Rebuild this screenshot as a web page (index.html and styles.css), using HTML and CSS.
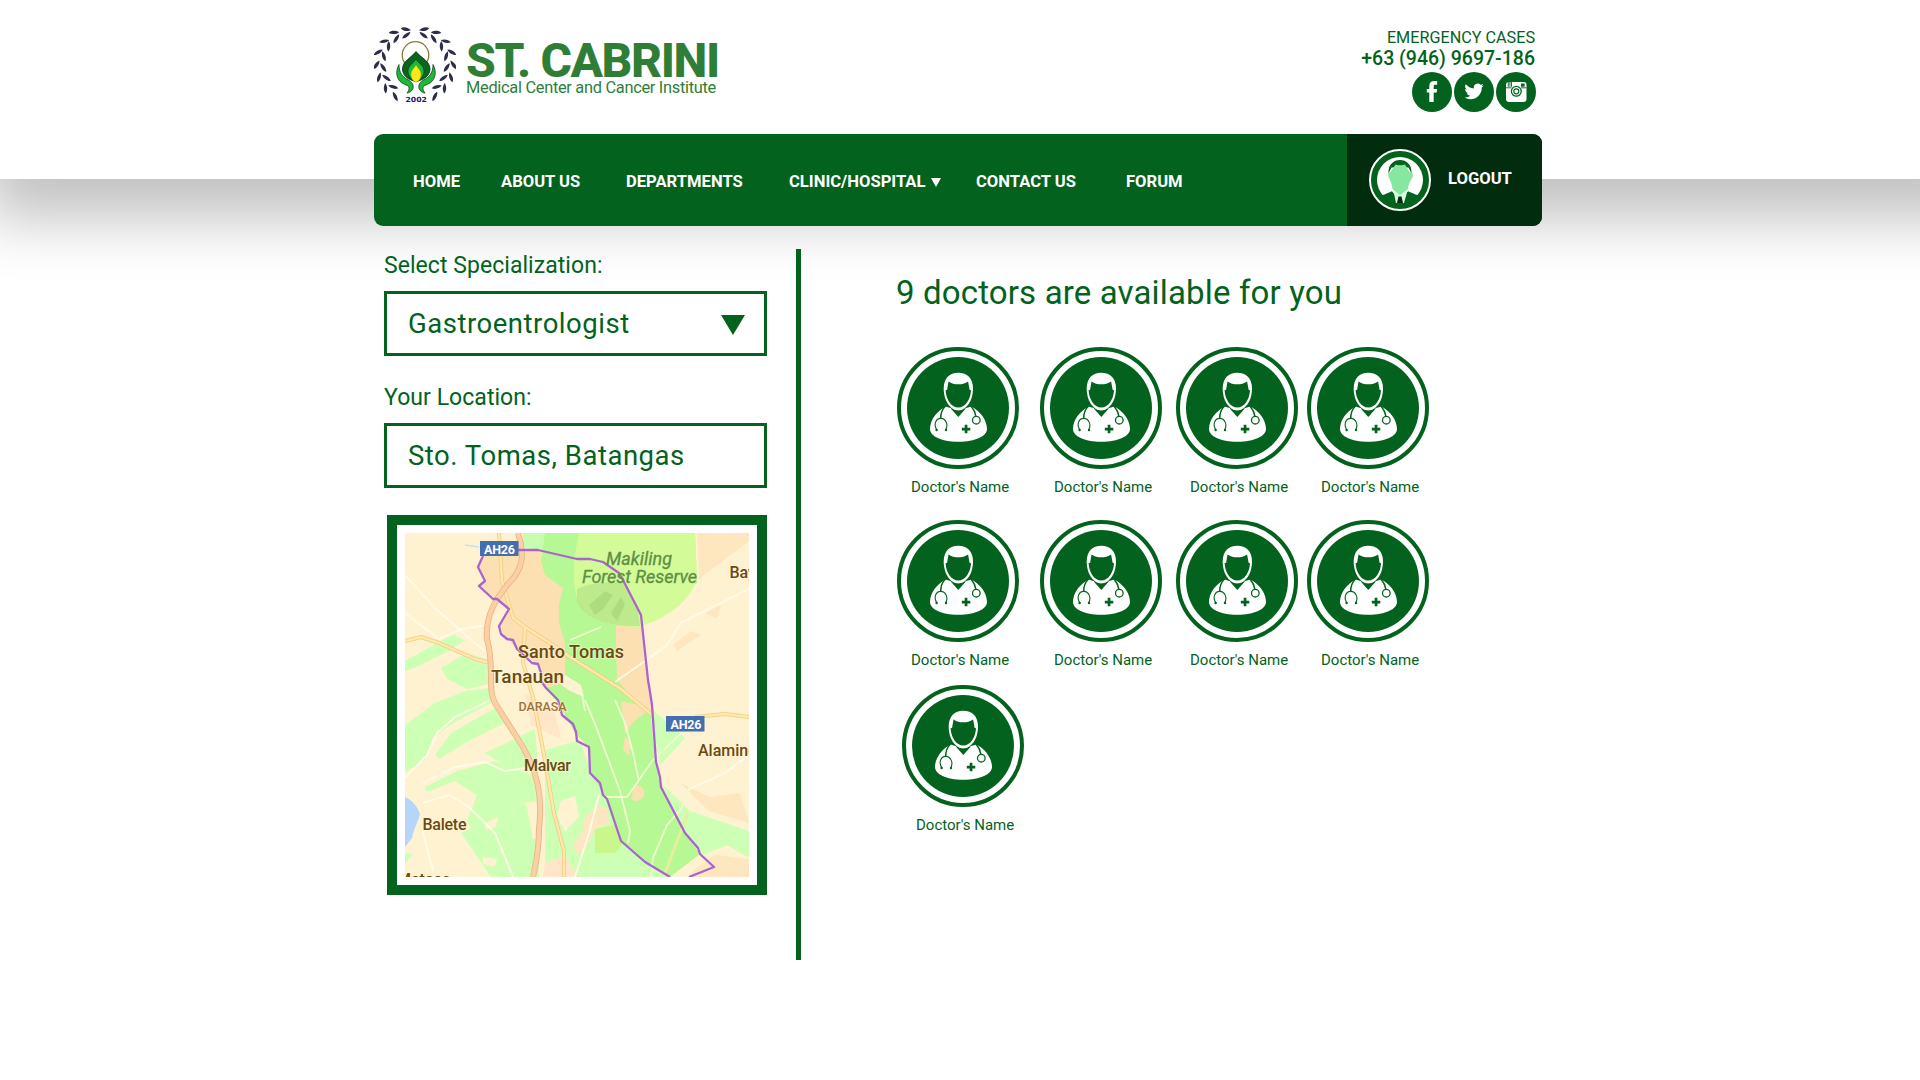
FILE: index.html
```html
<!DOCTYPE html>
<html lang="en">
<head>
<meta charset="utf-8">
<title>St. Cabrini Medical Center and Cancer Institute</title>
<link rel="stylesheet" href="styles.css">
</head>
<body>
<svg class="defs" aria-hidden="true">
  <defs>
    <symbol id="doctor" viewBox="0 0 122 122">
      <circle cx="61" cy="61" r="59" fill="#fff" stroke="#03621d" stroke-width="4"/>
      <circle cx="61" cy="61" r="51" fill="#03621d"/>
      <path fill="#fff" d="M48.5 59.5C40 64 33 73 33 82c0 7 11 12.800 28.300 12.800S90 89 90 82c0-9-7-18-15.500-22.500L67.500 61.500H55z"/>
      <path fill="#03621d" d="M54.500 60.800c4 3.400 9.600 3.400 13.600 0l.5 1-7.300 8.200-7.300-8.200z"/>
      <path fill="#fff" d="M46.700 41.500C46.700 31 52.500 25.700 61.300 25.700S76 31 76 41.500C76 53 70 63.200 61.300 63.200S46.700 53 46.700 41.500z"/>
      <path fill="#03621d" d="M51.500 34.500c5.500 3.800 14 3.800 19.600 0l1.500 8.300 1.400.4C73.600 52 68.500 60.500 61.300 60.500S49 52 48.600 43.200l1.500-.4z"/>
      <g fill="none" stroke="#03621d" stroke-width="1.500">
        <path d="M48.500 59c-3.200 3-4.800 7.500-4.800 12.500M74 59c2.500 3 4.300 6 4.800 10"/>
        <path stroke-width="1.100" d="M40 83c-4-5.500-1-11.600 3.700-11.600S52 77.500 48.500 83"/>
        <circle cx="79.300" cy="73.200" r="3.800" stroke-width="1.300"/>
      </g>
      <circle cx="39.600" cy="83" r="1.200" fill="#03621d"/><circle cx="49" cy="83" r="1.200" fill="#03621d"/>
      <path fill="#03621d" d="M67.700 77.800h2.700v2.900h2.900v2.700h-2.900v2.900h-2.700v-2.900h-2.900v-2.700h2.900z"/>
    </symbol>
    <path id="leaf" d="M.6-5.200C2.600-2.400 2 1.800-.6 5.200-2.400 2-2-2.400.6-5.200z"/>
    <g id="laurel">
      <use href="#leaf" transform="rotate(-15) translate(0 -35.500) rotate(-70)"/>
      <use href="#leaf" transform="rotate(-17) translate(0 -29.500) rotate(-118)"/>
      <use href="#leaf" transform="rotate(-34) translate(0 -37.500) rotate(-65)"/>
      <use href="#leaf" transform="rotate(-37) translate(0 -31) rotate(-118)"/>
      <use href="#leaf" transform="rotate(-54) translate(0 -38) rotate(-55)"/>
      <use href="#leaf" transform="rotate(-57) translate(0 -31.500) rotate(-128)"/>
      <use href="#leaf" transform="rotate(-73) translate(0 -38.500) rotate(-55)"/>
      <use href="#leaf" transform="rotate(-77) translate(0 -32) rotate(-128)"/>
      <use href="#leaf" transform="rotate(-92) translate(0 -38.500) rotate(-60)"/>
      <use href="#leaf" transform="rotate(-97) translate(0 -32) rotate(-125)"/>
      <use href="#leaf" transform="rotate(-111) translate(0 -38.500) rotate(-60)"/>
      <use href="#leaf" transform="rotate(-117) translate(0 -32) rotate(-125)"/>
      <use href="#leaf" transform="rotate(-130) translate(0 -38.500) rotate(-60)"/>
      <use href="#leaf" transform="rotate(-137) translate(0 -32) rotate(-125)"/>
      <use href="#leaf" transform="rotate(-149) translate(0 -38.500) rotate(-65)"/>
    </g>
  </defs>
</svg>

<div class="page">
<header class="masthead">
  <div class="container masthead-row">
    <a class="brand">
      <svg class="emblem" width="82" height="78" viewBox="0 0 82 78">
        <g fill="#2d2d48">
          <use href="#laurel" transform="translate(41 37.500)"/>
          <use href="#laurel" transform="translate(41 37.500) scale(-1 1)"/>
        </g>
        <circle cx="41.500" cy="29" r="13.300" fill="none" stroke="#8a7a3a" stroke-width="1.300"/>
        <path d="M42 25.500c-5 6.500-13.500 9.500-13.500 17.500 0 6 5 11 13.500 12.500C50.500 54 56 49 56 43c0-8-9-11-14-17.500z" fill="#0b6420" stroke="#092d10" stroke-width=".8"/>
        <path d="M42 33c-3 5-8 6.500-8 12 0 5 3.500 9 8 10 4.500-1 8-5 8-10 0-5.500-5-7-8-12z" fill="#19bb38" stroke="#092d10" stroke-width=".6"/>
        <path d="M42 39c-2 4-5 5-5 9s2 7.500 5 8c3-.5 5-4 5-8s-3-5-5-9z" fill="#ffe81a" stroke="#b0a300" stroke-width=".5"/>
        <path id="hand" d="M25 38.500c-4 7-2.500 15 3 18.500 4 2.500 7 2 7 5.500 0 2-1 3-2 4.500 4-.5 6.500-3.500 6.200-7-.4-4-4.500-5.500-8-8C27 49 25 45 25 38.500z" fill="#19bb38" stroke="#092d10" stroke-width=".7"/>
        <use href="#hand" transform="translate(84 0) scale(-1 1)"/>
        <text x="31.500" y="76" class="year" textLength="21.500" lengthAdjust="spacingAndGlyphs">2002</text>
      </svg>
      <span class="brand-text">
        <span class="brand-name">ST. CABRINI</span>
        <span class="brand-sub">Medical Center and Cancer Institute</span>
      </span>
    </a>
    <div class="contact">
      <span class="contact-label">EMERGENCY CASES</span>
      <span class="contact-phone">+63 (946) 9697-186</span>
      <div class="social">
        <svg width="40" height="40" viewBox="0 0 40 40"><circle cx="20" cy="20" r="20" fill="#03621d"/><path fill="#fff" d="M17.300 30V20.500h-2.500V17h2.500v-2.600c0-3.600 1.700-5.400 5-5.400h2.900v3.800h-1.900c-1.300 0-1.600.6-1.600 1.700V17h3.400l-.4 3.500h-3V30z"/></svg>
        <svg width="40" height="40" viewBox="0 0 40 40"><circle cx="20" cy="20" r="20" fill="#03621d"/><path fill="#fff" transform="translate(10.500 9.800) scale(.8)" d="M23.950 4.570a10 10 0 0 1-2.820.77 4.960 4.960 0 0 0 2.160-2.720c-.95.550-2 .95-3.130 1.180a4.920 4.920 0 0 0-8.380 4.480C7.690 8.100 4.070 6.130 1.640 3.160a4.920 4.920 0 0 0 1.520 6.570 4.900 4.900 0 0 1-2.230-.61v.06a4.920 4.920 0 0 0 3.950 4.830 5 5 0 0 1-2.210.08 4.940 4.940 0 0 0 4.600 3.420A9.870 9.870 0 0 1 0 19.540a13.990 13.990 0 0 0 7.560 2.210c9.050 0 14-7.500 14-13.980 0-.21 0-.42-.02-.63a9.940 9.940 0 0 0 2.410-2.570z"/></svg>
        <svg width="40" height="40" viewBox="0 0 40 40"><circle cx="20" cy="20" r="20" fill="#03621d"/><rect x="10" y="10" width="20.500" height="20" rx="3" fill="#fff"/><path stroke="#03621d" stroke-width=".9" d="M12.300 10v4.800M13.900 10v4.800M15.500 10v4.800M10 15.800h5.500M25 15.800h5.500"/><rect x="25" y="11.500" width="3.600" height="3.200" fill="#03621d"/><circle cx="20.300" cy="19.300" r="4.900" fill="#fff" stroke="#03621d" stroke-width="1.300"/><circle cx="20.300" cy="19.300" r="2.500" fill="#fff" stroke="#03621d" stroke-width="1.200"/></svg>
      </div>
    </div>
  </div>
  <div class="container nav">
    <nav class="nav-links">
      <a>HOME</a>
      <a>ABOUT US</a>
      <a>DEPARTMENTS</a>
      <a>CLINIC/HOSPITAL<i class="caret"></i></a>
      <a>CONTACT US</a>
      <a>FORUM</a>
    </nav>
    <a class="account">
      <svg width="62" height="62" viewBox="0 0 62 62">
        <circle cx="31" cy="31" r="30" fill="#03621d" stroke="#fff" stroke-width="2"/>
        <circle cx="31" cy="31" r="23" fill="#fff"/>
        <path fill="#03621d" d="M13 46.500l10-4.200L31 52l8-9.700 10 4.200A24 24 0 0 1 31 55.500 24 24 0 0 1 13 46.500z"/>
        <path fill="#03621d" d="M19.500 24.500C19 15.500 24.500 11 31 11s12 4.500 11.500 13.500l-3-6H22.500z"/>
        <path fill="#d5fadd" d="M24 40l3 14h2l2-6 2 6h2l4-14z"/>
        <path fill="#86e8a0" d="M26.500 15.500c1.500 1 7.500 1 9.500 0L40.500 23c3 .5 4 2 3.200 5-2.700 4-4.200 7.500-4.700 12l-8 6-7.500-6c-.5-4.500-2-8-4-12-1-3 0-4.500 2-5z"/>
        <path fill="#022c0e" d="M29.500 47.500h3l1.500 6.500h-6z"/>
      </svg>
      <span class="account-label">LOGOUT</span>
    </a>
  </div>
</header>

<main class="container content">
  <section class="search">
    <label class="field-label">Select Specialization:</label>
    <div class="field">Gastroentrologist<i class="field-caret"></i></div>
    <label class="field-label">Your Location:</label>
    <div class="field">Sto. Tomas, Batangas</div>
    <div class="map">
      <svg width="344" height="344" viewBox="0 0 344 344">
        <rect width="344" height="344" fill="#fff2d0"/>
        <!-- farmland -->
        <g fill="#cdffb5">
          <path d="M0 128L32 110 48 102 60 107 44 118 14 133 0 138z"/>
          <path d="M36 135L62 120 86 128 88 150 62 156 42 146z"/>
          <path d="M0 192L30 170 60 158 86 155 90 168 48 190 28 205 20 227 0 239z"/>
          <path d="M30 222L46 200 90 175 100 190 60 210 34 226z"/>
          <path d="M80 220L130 196 134 240 106 236z"/>
          <path d="M20 254L52 238 90 228 132 244 134 344 98 344 76 312 62 288 72 262 50 248 22 259z"/>
          <path d="M56 300L78 290 112 344 86 344z"/>
          <path d="M140 217L175 207 186 240 202 268 216 308 240 330 262 344 140 344z"/>
          <path d="M0 320l8 1-8 10z"/>
          <path d="M245 175L270 195 280 205 255 232z"/>
          <path d="M258 252L285 278 344 298 344 325 322 312 298 322 278 300z"/>
        </g>
        <path fill="#c9f78c" d="M190 296l20-4 8 18-8 10h-20z"/>
        <g fill="#fff2d0">
          <path d="M112 262l6 8 18-2 4 36-12 2-6-32z"/>
          <path d="M156 268l14-5 4 20-14 16-8-16z"/>
          <path d="M80 290l13-6-2 10-10 2zM78 324l14 2-2 8-12-3z"/>
        </g>
        <path fill="#ffe6c2" d="M180 284l14-12 8 4 2 14-14 6-8 18-10 8-4-10 10-14z"/>
        <path fill="#ffe6c8" d="M140 330l20-8 12 22h-34zM120 160l30 20 6 26-30-14z"/>
        <!-- municipality -->
        <path fill="#fde0b2" d="M78 23L73 34 80 48 74 53 88 66 104 76 94 93 102 106 112 116 133 131 141 155 153 167 247 167 243 147 236 82 219 49 198 29 133 17 113 17z"/>
        <path fill="#c8fcb0" d="M118 0H172V26L118 14z"/>
        <path fill="#b6f893" d="M140 0H290L292 50 238 92 211 94 212 145 224 152 245 172 250 229 256 254 280 300 295 321 265 344 240 329 216 308 202 266 185 240 184 214 170 200 153 170 141 155 160 150 160 110 154 90 154 72 158 55 140 42 136 28z"/>
        <path fill="#fde0b2" d="M211 92L236 88 243 147 247 172 250 180 234 174 212 146zM216 168l30 7-18 14-8 12z"/>
        <path fill="#fff2d0" d="M160 142l16 10 3 12-14-6-14-10z"/>
        <path fill="#fde0b2" d="M220 203l6 8-2 12-6-6zM230 252a8 8 0 1 1-4 14z"/>
        <!-- forest reserve -->
        <path fill="#d3fb98" d="M174 0H290l2 44C288 66 262 86 233 94 205 94 178 86 171 62 166 40 170 20 174 0z"/>
        <path fill="#b4e285" opacity=".7" d="M172 56C185 50 200 48 218 50L232 72 235 93C208 94 180 88 172 68z"/>
        <path fill="#95c66e" opacity=".4" d="M184 72L200 58 208 62 198 76 190 82zM206 80l10-16 4 8-8 16z"/>
        <path fill="#fde0b2" opacity=".6" d="M292 0h52v8l-50 38zM268 112l18-14 10 4-24 16zM300 80l16-8-4 14z"/>
        <path fill="#fde0b2" opacity=".6" d="M275 250l30 14 30-4 9 30-40-12zM290 336l20-14 34 4v18h-60z"/>
        <path fill="#b7d5fa" d="M0 264c7 3 13 10 15 17-2 8-6 14-8 24l-7 9z"/>
        <!-- minor roads -->
        <g fill="none" stroke="#fffbe8" stroke-width="1.800">
          <path d="M0 42L30 75 72 112 86 122M0 80L34 106 56 96 82 92"/>
          <path d="M0 245L22 222 32 200 50 184 84 168M18 250L50 234 80 229 100 238 128 234"/>
          <path d="M18 270L44 262 64 274 90 300 108 344M20 285L18 300 28 338M170 344L184 300 194 262"/>
          <g stroke="#f0fbd0"><path d="M180 167L192 196 215 258 225 298 223 310M210 167L220 190 228 220 234 248M198 264L222 264 232 250 247 228 285 192"/>
          <path d="M246 344L248 325 262 292 276 276 284 256M165 107L196 94M176 156L180 178"/></g>
          <path d="M210 149L240 128 262 112 276 90 344 56M284 256L320 240 344 222"/>
        </g>
        <path fill="none" stroke="#e6f09b" stroke-width="3" d="M260 340L283 280"/>
        <!-- highways -->
        <g fill="none" stroke-linejoin="round">
          <path stroke="#f5c98b" stroke-width="4" d="M94 0L97 48 108 85 120 94 148 112 165 124 216 156 247 182M120 94L118 130 128 164 139 222 149 280 159 318V344M0 108L16 104 34 110 70 126 86 130M290 184l30-3 24 3"/>
          <path stroke="#fdeaa9" stroke-width="2.400" d="M94 0L97 48 108 85 120 94 148 112 165 124 216 156 247 182M120 94L118 130 128 164 139 222 149 280 159 318V344M0 108L16 104 34 110 70 126 86 130M290 184l30-3 24 3"/>
          <path stroke="#e8b688" stroke-width="6" d="M113 0C120 22 118 36 104 50 92 64 80 82 82 106 90 134 82 156 90 170L118 214C132 240 138 262 134 296 134 320 130 334 128 344"/>
          <path stroke="#fccfa4" stroke-width="4.300" d="M113 0C120 22 118 36 104 50 92 64 80 82 82 106 90 134 82 156 90 170L118 214C132 240 138 262 134 296 134 320 130 334 128 344"/>
          <path stroke="#c9dfee" stroke-width="1.500" d="M60 12l14 2"/>
          <path stroke="#a965cf" stroke-width="2.300" d="M78 23L73 34 80 48 74 53 88 66 92 66 104 76 94 93 96 101 102 106 108 107 112 116 127 130 133 131 136 140 136 148 141 155 153 167 157 182 168 191 171 199 172 208 184 214 185 240 195 250 198 262 202 266 216 308 240 329 265 344M284 344L309 334 295 321 293 315 280 300 256 254 255 244 251 229 247 172 245 159 243 147 236 82 219 49 214 40 198 29 185 26 172 26 133 17 113 17"/>
        </g>
        <rect x="75" y="8" width="38.500" height="15" fill="#436eb0"/>
        <rect x="261" y="183" width="38.500" height="15.500" fill="#436eb0"/>
        <g class="shield"><text x="79" y="20.500" textLength="31">AH26</text><text x="265.500" y="195.800" textLength="31">AH26</text></g>
        <g class="reserve"><text x="201" y="32" textLength="66">Makiling</text><text x="177" y="50" textLength="115">Forest Reserve</text></g>
        <g class="place">
          <text x="113" y="125" font-size="18" textLength="106">Santo Tomas</text>
          <text x="86" y="150" font-size="19" textLength="73">Tanauan</text>
          <text x="119" y="238" font-size="16" textLength="47">Malvar</text>
          <text x="17.500" y="297" font-size="16" textLength="44">Balete</text>
          <text x="293" y="223" font-size="16">Alamino</text>
          <text x="324.500" y="45" font-size="16">Bay</text>
          <text x="-8" y="351.500" font-size="16">Mataas</text>
          <text x="113.500" y="178" font-size="12.500" textLength="48" class="barangay">DARASA</text>
        </g>
      </svg>
    </div>
  </section>

  <section class="results">
    <h1>9 doctors are available for you</h1>
    <div class="doctors">
      <a class="doctor"><svg><use href="#doctor"/></svg><span>Doctor's Name</span></a>
      <a class="doctor"><svg><use href="#doctor"/></svg><span>Doctor's Name</span></a>
      <a class="doctor"><svg><use href="#doctor"/></svg><span>Doctor's Name</span></a>
      <a class="doctor"><svg><use href="#doctor"/></svg><span>Doctor's Name</span></a>
      <a class="doctor"><svg><use href="#doctor"/></svg><span>Doctor's Name</span></a>
      <a class="doctor"><svg><use href="#doctor"/></svg><span>Doctor's Name</span></a>
      <a class="doctor"><svg><use href="#doctor"/></svg><span>Doctor's Name</span></a>
      <a class="doctor"><svg><use href="#doctor"/></svg><span>Doctor's Name</span></a>
      <a class="doctor doctor-last"><svg><use href="#doctor"/></svg><span>Doctor's Name</span></a>
    </div>
  </section>
</main>
</div>
</body>
</html>
```
FILE: styles.css
```css
* { box-sizing: border-box; }
body {
  margin: 0;
  background: #fff;
  color: #03621d;
  font-family: Roboto, "Liberation Sans", sans-serif;
}
svg { display: block; }
.defs { position: absolute; width: 0; height: 0; }
.page { height: 1080px; overflow: hidden; }
.container { width: 1168px; margin-left: 374px; }

.masthead { width: 2000px; height: 179px; margin-left: -15px; padding-left: 15px; background: #fff; box-shadow: 0 40px 60px rgba(0, 0, 0, .245); }
.masthead-row { display: flex; justify-content: space-between; height: 134px; padding: 26px 6px 0 0; }
.brand { display: flex; gap: 10px; }
.brand-text { display: flex; flex-direction: column; padding-top: 17px; color: #2f7e37; white-space: nowrap; }
.brand-name { font-size: 48px; line-height: 35px; font-weight: 800; letter-spacing: -1.400px; }
.brand-sub { font-size: 16.400px; line-height: 20px; letter-spacing: -.3px; }
.year { font: bold 7px "DejaVu Sans", sans-serif; fill: #20206a; }

.contact { display: flex; flex-direction: column; align-items: flex-end; padding-top: 2px; }
.contact-label { font-size: 16.200px; line-height: 20px; padding-right: 1px; }
.contact-phone { font-size: 19.500px; line-height: 22px; font-weight: 500; padding-right: 1px; }
.social { display: flex; gap: 2px; margin-top: 2px; }

.nav { display: flex; justify-content: space-between; height: 92px; border-radius: 9px; overflow: hidden; background: #03621d; color: #fff; font-size: 16.600px; font-weight: 700; }
.nav-links { display: grid; grid-template-columns: 88px 125px 163px 187px 150px 80px; align-items: center; padding: 2px 0 0 39px; }
.nav-links a { display: flex; align-items: center; gap: 5px; }
.caret { margin-top: 2px; border: 5px solid transparent; border-top: 9px solid #fff; border-bottom: 0; }
.account { display: flex; align-items: center; gap: 17px; width: 195px; padding-left: 22px; background: #022c0e; }
.account-label { padding-bottom: 3px; }

.content { display: flex; padding-top: 70px; }
.search { width: 427px; height: 711px; padding: 0 34px 0 10px; border-right: 5px solid #03621d; }
.field-label { display: block; height: 42px; padding-top: 2px; font-size: 23px; line-height: 30px; letter-spacing: .05px; }
.field { display: flex; justify-content: space-between; align-items: center; width: 383px; height: 65px; margin-bottom: 25px; padding: 0 19px 0 21px; border: 3px solid #03621d; background: #fff; font-size: 27.500px; letter-spacing: .52px; }
.field-caret { margin-top: 3px; border: 12px solid transparent; border-top: 20px solid #03621d; border-bottom: 0; }
.map { width: 380px; height: 380px; margin: 27px 0 0 3px; padding: 8px; border: 10px solid #03621d; background: #fff; }
.shield { font: bold 12.500px Roboto, sans-serif; fill: #fff; }
.reserve { font: italic 400 18px Roboto, sans-serif; fill: #5d8f45; stroke: #5d8f45; stroke-width: .3px; }
.place { font-family: Roboto, sans-serif; font-weight: 500; fill: #6b4a12; stroke: #fff6da; stroke-width: 2px; stroke-opacity: .5; paint-order: stroke; }
.barangay { fill: #a0703a; }

.results { padding: 24px 0 0 95px; }
h1 { margin: 0 0 35px; font-size: 33px; line-height: 39px; font-weight: 400; letter-spacing: .15px; white-space: nowrap; }
.doctors { display: grid; grid-template-columns: 143px 136px 131px 122px; grid-template-rows: 173px 165px 150px; margin-left: 1px; }
.doctor { display: flex; flex-direction: column; width: 122px; font-size: 15px; line-height: 20px; }
.doctor svg { width: 122px; height: 122px; }
.doctor span { margin: 8px 0 0 14px; white-space: nowrap; }
.doctor-last { margin-left: 5px; }
```
